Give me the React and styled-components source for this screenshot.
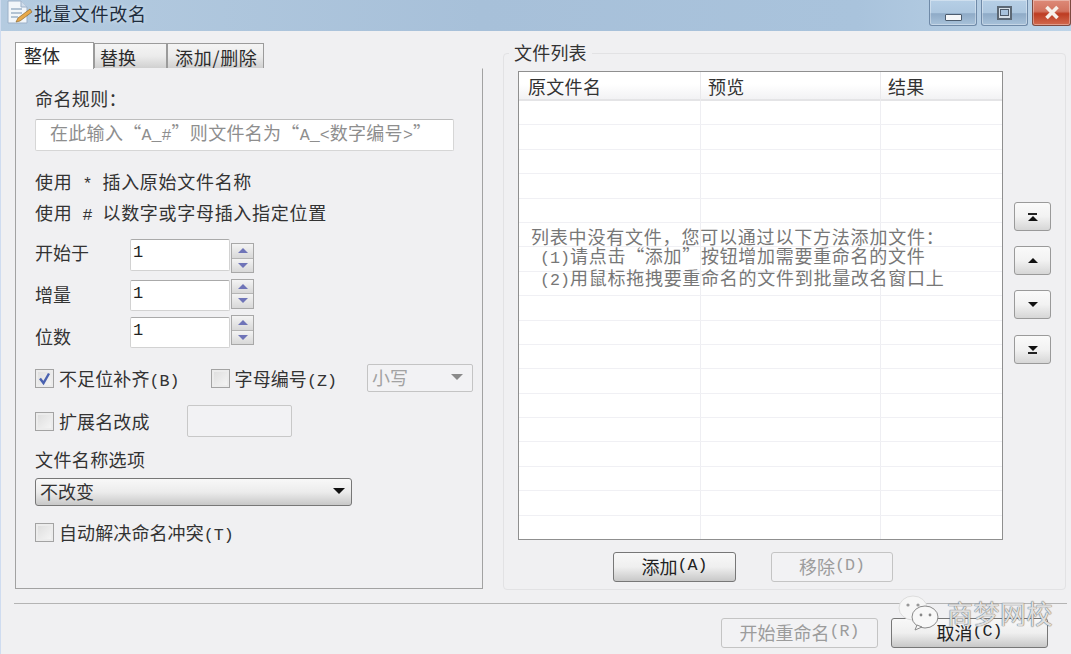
import React from "react";
import styled, { createGlobalStyle, css } from "styled-components";

const Global = createGlobalStyle`
  html, body { margin: 0; padding: 0; background: #f0f0f2; }
  * { box-sizing: border-box; }
  body { font-family: "Noto Sans CJK SC", sans-serif; font-size: 18px; color: #333; }
`;
const cjk = `"Noto Sans CJK SC", sans-serif`;

const Win = styled.div`
  width: 1071px; height: 654px; position: relative; overflow: hidden;
  display: flex; flex-direction: column; background: #f0f0f2;
  border-left: 1px solid #cfdcf0;
`;
const TitleBar = styled.div`
  height: 31px; flex: none; display: flex; align-items: flex-start; padding: 0 0 0 5px;
  background: linear-gradient(90deg, #b4cbe0 0%, #a7c0d9 45%, #a9c3dc 80%, #bdd4e8 100%);
`;
const TitleIcon = styled.svg`width: 28px; height: 26px; flex: none; margin-top: 0;`;
const TitleText = styled.div`
  font-family: ${cjk}; font-size: 18px; letter-spacing: .8px; line-height: 27px; color: #1e2c3c;
  text-shadow: 0 0 4px #dbe8f3; flex: 1;
`;
const WinBtn = styled.div`
  height: 26px; margin-left: ${p => p.$ml || 0}px; width: ${p => p.$w}px; flex: none;
  display: flex; align-items: center; justify-content: center;
  border: 1px solid ${p => (p.$close ? "#7e4a40" : "#6f8aa8")}; border-top: none;
  border-radius: 0 0 3px 3px;
  background: ${p => (p.$close
    ? "linear-gradient(#dd8a78 0%, #d2735f 45%, #bd3c22 55%, #d26a4e 100%)"
    : "linear-gradient(#b6cfe6 0%, #adc7df 50%, #8fabc7 55%, #a8c2da 100%)")};
  box-shadow: inset 0 0 0 1px rgba(255,255,255,.35);
`;
const MinGlyph = styled.div`
  width: 17px; height: 7px; margin-top: 9px; background: #f4f6f8; border: 1px solid #4c5c6e; border-radius: 1px;
`;
const MaxGlyph = styled.div`
  width: 15px; height: 14px; background: #d6dfe7; border: 2px solid #5c6874; display: flex;
  align-items: center; justify-content: center;
  &::after { content: ""; width: 7px; height: 5px; border: 1px solid #4e5a68; background: #a9c3dc; }
`;
const Main = styled.div`display: flex; height: 572px; flex: none; padding-left: 14px;`;

const LeftCol = styled.div`width: 468px; flex: none; padding-top: 11px;`;
const Tabs = styled.div`display: flex; height: 26px; align-items: flex-end; position: relative; z-index: 1;`;
const Tab = styled.div`
  font-family: ${cjk}; font-size: 18px; white-space: nowrap; letter-spacing: ${p => p.$ls || 0}px;
  width: ${p => p.$w}px; height: ${p => (p.$active ? 27 : 25)}px; padding-left: ${p => p.$pl}px;
  padding-top: ${p => (p.$active ? 1 : 2)}px; line-height: 22px;
  margin-bottom: ${p => (p.$active ? -1 : 0)}px;
  border: 1px solid #9b9b9b; border-bottom: none; color: #2b2b2b;
  ${p => (p.$active ? css`background: #fff;` : css`background: linear-gradient(#f4f4f4 0%, #ececec 50%, #d0d0d0 100%);`)}
`;
const Panel = styled.div`
  height: 521px; padding: 16px 0 0 19px; background: #f0f0f2;
  border: 1px solid #a2a2a2; border-top: 1px solid #f0f0f2; display: flex; flex-direction: column;
`;
const Label = styled.div`
  height: ${p => p.$h || 24}px; line-height: ${p => p.$h || 24}px; margin-top: ${p => p.$mt || 0}px; flex: none;
  font-family: ${cjk}; font-size: 18px; color: #333; white-space: pre; letter-spacing: ${p => p.$ls ?? 0.4}px;
`;
const Ascii = styled.span`font-family: "Liberation Mono", monospace; font-size: 16.7px; letter-spacing: 0; white-space: pre;`;
const Placeholder = styled.div`
  width: 419px; height: 32px; margin-top: 8px; padding-left: 14px; flex: none; background: #fff;
  border: 1px solid #d6d6d6; border-top-color: #bdbdbd; border-radius: 2px;
  font-family: ${cjk}; font-size: 18px; line-height: 25px; color: #8e8e8e; white-space: nowrap; letter-spacing: .3px;
`;
const Row = styled.div`
  display: flex; align-items: center; flex: none; height: ${p => p.$h}px; margin-top: ${p => p.$mt || 0}px;
`;
const FieldLabel = styled.div`
  width: 95px; flex: none; font-family: ${cjk}; font-size: 18px; color: #333; margin-top: ${p => p.$mt}px;
`;
const NumInput = styled.div`
  width: 100px; height: 100%; background: #fff; border: 1px solid #d2d2d2; border-top-color: #aaa; border-radius: 2px;
  padding-left: 2px; font-family: "Liberation Mono", monospace; font-size: 17px; line-height: 26px; color: #222;
`;
const Spin = styled.div`
  width: 23px; height: 30px; margin-left: 1px; margin-top: ${p => p.$mt}px; display: flex; flex-direction: column;
  border: 1px solid #a8a8a8; flex: none;
`;
const SpinBtn = styled.div`
  flex: 1; display: flex; align-items: center; justify-content: center;
  background: linear-gradient(#f4f4f4, #d8d8d8);
  & + & { border-top: 1px solid #b4b4b4; }
  &::after {
    content: ""; width: 0; height: 0; border-left: 5px solid transparent; border-right: 5px solid transparent;
    ${p => (p.$up ? "border-bottom: 5px solid #6f74b8;" : "border-top: 5px solid #6f74b8;")}
  }
`;
const Check = styled.div`
  width: 19px; height: 19px; flex: none; margin-left: ${p => p.$ml || 0}px;
  border: 1px solid #a3a3a3; background: linear-gradient(135deg, #dcdcdc, #f7f7f7);
  box-shadow: inset 0 0 0 2px #ececec; display: flex; align-items: center; justify-content: center;
`;
const CheckText = styled.div`
  font-family: ${cjk}; font-size: 18px; color: #333; margin-left: 5px; white-space: nowrap; letter-spacing: .1px;
`;
const Combo = styled.div`
  width: 106px; height: 28px; margin-left: 30px; flex: none; display: flex; align-items: center; justify-content: space-between;
  padding: 0 9px 3px 4px; border: 1px solid #c4c4c4; border-radius: 2px; background: #f2f2f4;
  font-family: ${cjk}; font-size: 18px; color: #a2a2a2;
`;
const Arrow = styled.div`
  width: 0; height: 0; border-left: 6px solid transparent; border-right: 6px solid transparent;
  border-top: 6px solid ${p => p.$c};
`;
const ExtInput = styled.div`
  width: 105px; height: 32px; margin-left: 37px; border: 1px solid #c8c8c8; border-radius: 2px; background: #f2f2f4;
`;
const Select = styled.div`
  width: 317px; height: 28px; margin-top: 7px; flex: none; display: flex; align-items: center; justify-content: space-between;
  padding: 0 6px 2px 4px; border: 1px solid #777; border-radius: 3px;
  background: linear-gradient(#f8f8f8 0%, #ececec 50%, #c8c8c8 100%);
  font-family: ${cjk}; font-size: 18px; color: #333;
`;

const Group = styled.div`
  width: 563px; height: 537px; margin: 22px 0 0 20px; flex: none; position: relative;
  border: 1px solid #e2e2e4; border-radius: 4px; padding: 17px 0 0 14px;
`;
const GroupTitle = styled.div`
  position: absolute; top: -14px; left: 5px; padding: 0 5px 0 5px; background: #f0f0f2;
  font-family: ${cjk}; font-size: 18px; line-height: 24px; color: #333; letter-spacing: .2px;
`;
const GroupBody = styled.div`display: flex; align-items: flex-start;`;
const Table = styled.div`
  width: 485px; height: 469px; flex: none; background: #fff; border: 1px solid #8f8f8f; position: relative; overflow: hidden;
`;
const THead = styled.div`
  display: grid; grid-template-columns: 181px 180px 1fr; height: 29px;
  background: linear-gradient(#fff 0%, #fff 45%, #f2f2f4 100%); border-bottom: 2px solid #e4e4e6;
`;
const Th = styled.div`
  font-family: ${cjk}; font-size: 18px; line-height: 29px; color: #333; padding-left: ${p => p.$pl}px; letter-spacing: .3px;
  & + & { border-left: 1px solid #e9e9ec; }
`;
const TRow = styled.div`
  display: grid; grid-template-columns: 181px 180px 1fr; height: 24.4px; border-bottom: 1px solid #f0f0f4;
`;
const Td = styled.div`& + & { border-left: 1px solid #eeeef2; }`;
const Empty = styled.div`
  position: absolute; left: 12px; top: 155px; font-family: ${cjk}; font-size: 18px; line-height: 18.5px; color: #777;
  white-space: nowrap;
`;
const EmptyLine = styled.div`padding-left: ${p => p.$pl || 0}px; letter-spacing: ${p => p.$ls}px;`;
const SideCol = styled.div`
  display: flex; flex-direction: column; width: 37px; margin: 131px 0 0 11px; flex: none;
`;
const SideBtn = styled.div`
  width: 37px; height: 29px; margin-bottom: ${p => p.$mb}px; display: flex; flex-direction: column;
  align-items: center; justify-content: center; gap: 1px;
  border: 1px solid #9a9a9a; border-radius: 3px; background: linear-gradient(#fafafa 0%, #f2f2f2 50%, #d6d6d6 100%);
`;
const Bar = styled.div`width: 9px; height: 2px; background: #222;`;
const Tri = styled.div`
  width: 0; height: 0; border-left: 5px solid transparent; border-right: 5px solid transparent;
  ${p => (p.$up ? "border-bottom: 5px solid #111;" : "border-top: 5px solid #111;")}
`;
const ActionRow = styled.div`display: flex; margin: 12px 0 0 95px; gap: 35px;`;
const Btn = styled.div`
  width: ${p => p.$w}px; height: 30px; display: flex; align-items: center; justify-content: center; white-space: nowrap;
  font-family: ${cjk}; font-size: 18px; border-radius: 3px; padding-bottom: 3px;
  ${p => (p.$off
    ? css`border: 1px solid #c4c4c4; background: #f2f2f4; color: #9c9c9c;`
    : css`border: 1px solid #777; background: linear-gradient(#f8f8f8 0%, #efefef 50%, #c8c8c8 100%); color: #222;`)}
`;
const Footer = styled.div`
  flex: 1; margin: 0 4px 0 13px; position: relative; border-top: 1px solid #b4b4b4;
  display: flex; justify-content: flex-end; gap: 13px; padding: 14px 19px 0 0;
`;
const Mark = styled.div`
  position: absolute; left: 882px; top: -9px; display: flex; align-items: center; pointer-events: none;
`;
const MarkIcon = styled.svg`width: 44px; height: 36px; flex: none;`;
const MarkText = styled.div`
  font-family: ${cjk}; font-size: 26px; line-height: 30px; margin-left: 7px; color: rgba(250,250,250,.82); white-space: nowrap;
  letter-spacing: .5px; text-shadow: 0 0 1px #666, 0 0 1px #666;
`;

function Checkmark() {
  return (
    <svg width="15" height="15" viewBox="0 0 15 15">
      <path d="M3 7.5 L6.5 12 L12 2.5" fill="none" stroke="#4a62b0" strokeWidth="2.4" />
    </svg>
  );
}

export default function App() {
  return (
    <Win>
      <Global />
      <TitleBar>
        <TitleIcon viewBox="0 0 28 26">
          <path d="M2 1 H15 L21 7 V23 H2 Z" fill="#f2f6fa" stroke="#9cb0c8" />
          <path d="M15 1 V7 H21" fill="#cfdcea" stroke="#9cb0c8" />
          <path d="M5 9 H16 M5 13 H16 M5 17 H12" stroke="#9db2c8" strokeWidth="1.4" />
          <path d="M10 22 L12 18 L24 9 L26 12 L14 21 Z" fill="#e8a94a" stroke="#8c6a30" strokeWidth=".7" />
        </TitleIcon>
        <TitleText>批量文件改名</TitleText>
        <WinBtn $w={48}><MinGlyph /></WinBtn>
        <WinBtn $w={47} $ml={4}><MaxGlyph /></WinBtn>
        <WinBtn $w={39} $ml={4} $close>
          <svg width="16" height="15" viewBox="0 0 16 15">
            <path d="M2.5 2 L13.5 13 M13.5 2 L2.5 13" stroke="#f6f0ea" strokeWidth="3.6" />
          </svg>
        </WinBtn>
      </TitleBar>
      <Main>
        <LeftCol>
          <Tabs>
            <Tab $w={79} $pl={8} $active>整体</Tab>
            <Tab $w={73} $pl={5}>替换</Tab>
            <Tab $w={97} $pl={7} $ls={.7}>添加/删除</Tab>
          </Tabs>
          <Panel>
            <Label $h={26}>命名规则：</Label>
            <Placeholder>在此输入“<Ascii>A_#</Ascii>”则文件名为“<Ascii>A_&lt;</Ascii>数字编号<Ascii>&gt;</Ascii>”</Placeholder>
            <Label $mt={18} $ls={.7}>使用<Ascii> * </Ascii>插入原始文件名称</Label>
            <Label $mt={7} $ls={.7}>使用<Ascii> # </Ascii>以数字或字母插入指定位置</Label>
            <Row $h={32} $mt={15}>
              <FieldLabel $mt={-6}>开始于</FieldLabel><NumInput>1</NumInput>
              <Spin $mt={6}><SpinBtn $up /><SpinBtn /></Spin>
            </Row>
            <Row $h={31} $mt={9}>
              <FieldLabel $mt={-4}>增量</FieldLabel><NumInput>1</NumInput>
              <Spin $mt={-4}><SpinBtn $up /><SpinBtn /></Spin>
            </Row>
            <Row $h={31} $mt={6}>
              <FieldLabel $mt={6}>位数</FieldLabel><NumInput>1</NumInput>
              <Spin $mt={-5}><SpinBtn $up /><SpinBtn /></Spin>
            </Row>
            <Row $h={28} $mt={16}>
              <Check><Checkmark /></Check>
              <CheckText>不足位补齐<Ascii>(B)</Ascii></CheckText>
              <Check $ml={31} />
              <CheckText>字母编号<Ascii>(Z)</Ascii></CheckText>
              <Combo>小写<Arrow $c="#8a8a8a" /></Combo>
            </Row>
            <Row $h={32} $mt={13}>
              <Check />
              <CheckText>扩展名改成</CheckText>
              <ExtInput />
            </Row>
            <Label $mt={10}>文件名称选项</Label>
            <Select>不改变<Arrow $c="#111" /></Select>
            <Row $h={26} $mt={13}>
              <Check />
              <CheckText>自动解决命名冲突<Ascii>(T)</Ascii></CheckText>
            </Row>
          </Panel>
        </LeftCol>
        <Group>
          <GroupTitle>文件列表</GroupTitle>
          <GroupBody>
            <Table>
              <THead>
                <Th $pl={9}>原文件名</Th>
                <Th $pl={7}>预览</Th>
                <Th $pl={7}>结果</Th>
              </THead>
              {Array.from({ length: 18 }, (_, i) => (
                <TRow key={i}><Td /><Td /><Td /></TRow>
              ))}
              <Empty>
                <EmptyLine $ls={.8}>列表中没有文件，您可以通过以下方法添加文件：</EmptyLine>
                <EmptyLine $pl={9} $ls={.7}><Ascii>(1)</Ascii>请点击“添加”按钮增加需要重命名的文件</EmptyLine>
                <EmptyLine $pl={9} $ls={.72}><Ascii>(2)</Ascii>用鼠标拖拽要重命名的文件到批量改名窗口上</EmptyLine>
              </Empty>
            </Table>
            <SideCol>
              <SideBtn $mb={15}><Bar /><Tri $up /></SideBtn>
              <SideBtn $mb={15}><Tri $up /></SideBtn>
              <SideBtn $mb={16}><Tri /></SideBtn>
              <SideBtn $mb={0}><Tri /><Bar /></SideBtn>
            </SideCol>
          </GroupBody>
          <ActionRow>
            <Btn $w={123}>添加<Ascii>(A)</Ascii></Btn>
            <Btn $w={122} $off>移除<Ascii>(D)</Ascii></Btn>
          </ActionRow>
        </Group>
      </Main>
      <Footer>
        <Btn $w={157} $off>开始重命名<Ascii>(R)</Ascii></Btn>
        <Btn $w={157}>取消<Ascii>(C)</Ascii></Btn>
        <Mark>
          <MarkIcon viewBox="0 0 44 36">
            <ellipse cx="17" cy="13" rx="14" ry="12" fill="#f6f6f6" stroke="#ddd" />
            <ellipse cx="29" cy="22" rx="13" ry="11" fill="#f8f8f8" stroke="#8a8a8a" />
            <path d="M21 30 L19 35 L26 32 Z" fill="#f8f8f8" stroke="#8a8a8a" />
            <circle cx="12" cy="10" r="1.6" fill="#999" />
            <circle cx="22" cy="10" r="1.6" fill="#999" />
            <circle cx="25" cy="20" r="1.4" fill="#888" />
            <circle cx="34" cy="20" r="1.4" fill="#888" />
          </MarkIcon>
          <MarkText>商梦网校</MarkText>
        </Mark>
      </Footer>
    </Win>
  );
}
